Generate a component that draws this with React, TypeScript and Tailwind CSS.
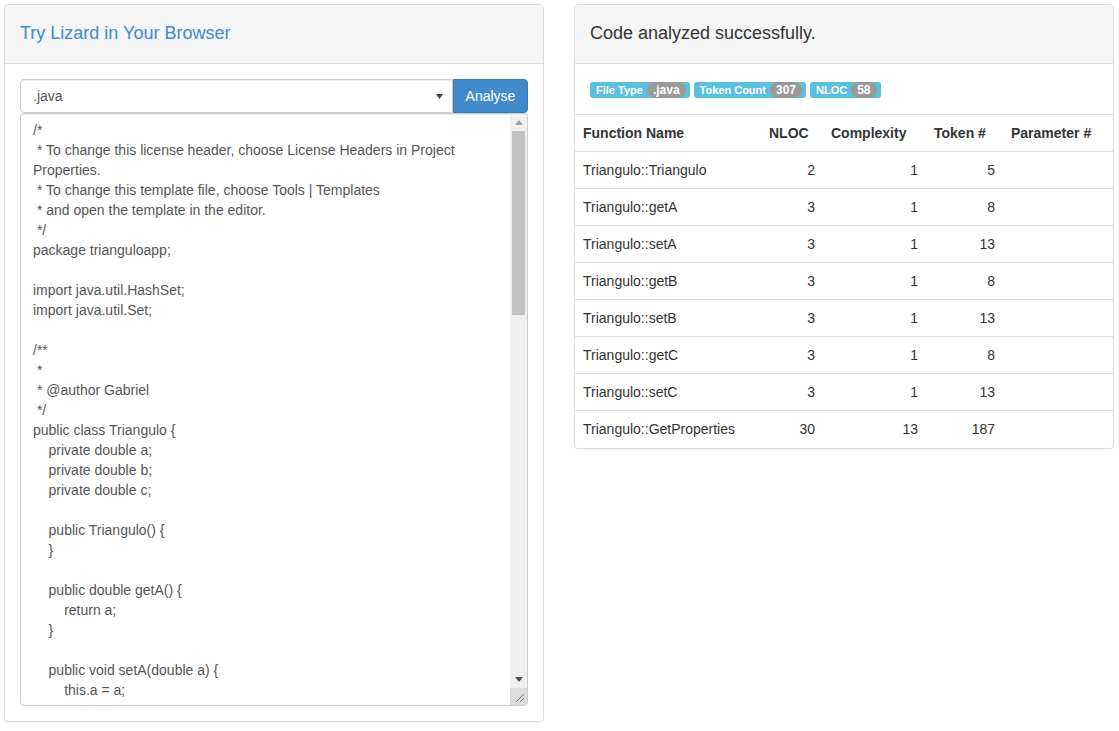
import React from "react";

const code = `/*
 * To change this license header, choose License Headers in Project Properties.
 * To change this template file, choose Tools | Templates
 * and open the template in the editor.
 */
package trianguloapp;

import java.util.HashSet;
import java.util.Set;

/**
 *
 * @author Gabriel
 */
public class Triangulo {
    private double a;
    private double b;
    private double c;

    public Triangulo() {
    }

    public double getA() {
        return a;
    }

    public void setA(double a) {
        this.a = a;`;

const rows: [string, number, number, number][] = [
  ["Triangulo::Triangulo", 2, 1, 5],
  ["Triangulo::getA", 3, 1, 8],
  ["Triangulo::setA", 3, 1, 13],
  ["Triangulo::getB", 3, 1, 8],
  ["Triangulo::setB", 3, 1, 13],
  ["Triangulo::getC", 3, 1, 8],
  ["Triangulo::setC", 3, 1, 13],
  ["Triangulo::GetProperties", 30, 13, 187],
];

function Label({ name, value }: { name: string; value: string }) {
  return (
    <span className="inline-flex items-center h-[16px] rounded-[3px] bg-[#5bc0de] pl-[6px] pr-[4px] text-white font-bold text-[11px] leading-none">
      <span>{name}</span>
      <span className="ml-[4px] h-[16px] inline-flex items-center rounded-full bg-[#999999] px-[6px] text-[12px]">
        {value}
      </span>
    </span>
  );
}

export default function App() {
  return (
    <div
      className="bg-white w-[1119px] h-[731px] pt-[4px] pl-[4px] text-[14px] text-[#333333]"
      style={{ fontFamily: '"Liberation Sans", Arial, Helvetica, sans-serif' }}
    >
      <div className="flex gap-[30px] items-start">
        {/* Left panel */}
        <div className="w-[540px] border border-[#dddddd] rounded-[4px] shadow-[0_1px_1px_rgba(0,0,0,0.05)] bg-white">
          <div className="h-[59px] bg-[#f5f5f5] border-b border-[#dddddd] rounded-t-[3px] flex items-center px-[15px] pb-[2px]">
            <h3 className="text-[18px] text-[#428bca] leading-none">Try Lizard in Your Browser</h3>
          </div>
          <div className="p-[15px]">
            <div className="flex h-[34px]">
              <div className="flex-1 flex items-center justify-between border border-[#cccccc] rounded-l-[4px] px-[12px] text-[#555555] shadow-[inset_0_1px_1px_rgba(0,0,0,0.075)]">
                <span>.java</span>
                <svg width="7" height="5" viewBox="0 0 7 5" className="mr-[-3px]">
                  <polygon points="0,0 7,0 3.5,5" fill="#444444" />
                </svg>
              </div>
              <button className="w-[75px] bg-[#428bca] border border-[#357ebd] rounded-r-[4px] text-white text-[14px]">
                Analyse
              </button>
            </div>
            <div className="h-[593px] border border-[#cccccc] rounded-[4px] flex overflow-hidden shadow-[inset_0_1px_1px_rgba(0,0,0,0.075)]">
              <div className="flex-1 overflow-hidden px-[12px] pt-[6px]">
                <div className="whitespace-pre-wrap text-[14px] leading-[20px] text-[#555555]">{code}</div>
              </div>
              <div className="w-[17px] bg-[#f0f0f0] flex flex-col">
                <div className="h-[17px] flex items-center justify-center">
                  <svg width="8" height="5" viewBox="0 0 8 5">
                    <polygon points="4,0 8,5 0,5" fill="#a3a3a3" />
                  </svg>
                </div>
                <div className="flex-1 flex flex-col">
                  <div className="h-[184px] mx-[2px] bg-[#c1c1c1]" />
                </div>
                <div className="h-[17px] flex items-center justify-center">
                  <svg width="8" height="5" viewBox="0 0 8 5">
                    <polygon points="0,0 8,0 4,5" fill="#505050" />
                  </svg>
                </div>
                <div className="h-[17px] bg-[#dcdcdc] flex items-end justify-end p-[2px]">
                  <svg width="11" height="11" viewBox="0 0 11 11">
                    <line x1="10" y1="2" x2="2" y2="10" stroke="#777" strokeWidth="1" />
                    <line x1="10" y1="6" x2="6" y2="10" stroke="#777" strokeWidth="1" />
                  </svg>
                </div>
              </div>
            </div>
          </div>
        </div>

        {/* Right panel */}
        <div className="w-[540px] border border-[#dddddd] rounded-[4px] shadow-[0_1px_1px_rgba(0,0,0,0.05)] bg-white overflow-hidden">
          <div className="h-[59px] bg-[#f5f5f5] border-b border-[#dddddd] flex items-center px-[15px] pb-[2px]">
            <h3 className="text-[18px] text-[#333333] leading-none">Code analyzed successfully.</h3>
          </div>
          <div className="px-[15px] pt-[18px] pb-[16px] flex gap-[4px]">
            <Label name="File Type" value=".java" />
            <Label name="Token Count" value="307" />
            <Label name="NLOC" value="58" />
          </div>
          <table className="w-full border-collapse">
            <thead>
              <tr className="border-t border-[#dddddd]">
                <th className="w-[186px] h-[37px] px-[8px] pt-px text-left font-bold">Function Name</th>
                <th className="w-[62px] px-[8px] pt-px text-left font-bold">NLOC</th>
                <th className="w-[103px] px-[8px] pt-px text-left font-bold">Complexity</th>
                <th className="w-[77px] px-[8px] pt-px text-left font-bold">Token #</th>
                <th className="px-[8px] pt-px text-left font-bold">Parameter #</th>
              </tr>
            </thead>
            <tbody>
              {rows.map((r) => (
                <tr key={r[0]} className="border-t border-[#dddddd]">
                  <td className="h-[37px] px-[8px] text-left">{r[0]}</td>
                  <td className="px-[8px] text-right">{r[1]}</td>
                  <td className="px-[8px] text-right">{r[2]}</td>
                  <td className="px-[8px] text-right">{r[3]}</td>
                  <td className="px-[8px]"></td>
                </tr>
              ))}
            </tbody>
          </table>
        </div>
      </div>
    </div>
  );
}
